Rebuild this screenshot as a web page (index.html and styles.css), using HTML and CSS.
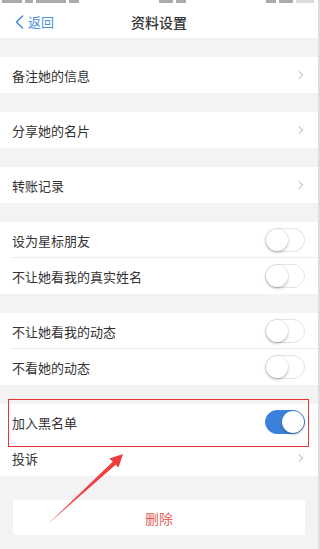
FILE: index.html
```html
<!DOCTYPE html>
<html lang="zh">
<head>
<meta charset="utf-8">
<link rel="stylesheet" href="styles.css">
</head>
<body>
<div class="page">
  <div class="status">
    <div class="frags">
      <i class="f w20"></i><i class="f w8"></i><i class="f w30"></i><i class="f w10"></i>
    </div>
    <div class="frags">
      <i class="f w14"></i><i class="f w10"></i>
    </div>
    <div class="frags">
      <i class="f w10"></i><i class="f w14"></i><i class="f w18 light"></i>
    </div>
  </div>
  <div class="nav">
    <div class="back">
      <svg class="back-ico" width="9" height="14" viewBox="0 0 9 14"><path d="M7.5 1 L1.5 7 L7.5 13" fill="none" stroke="#4a8fd8" stroke-width="1.6" stroke-linecap="round" stroke-linejoin="round"/></svg>
      <span>返回</span>
    </div>
    <div class="title">资料设置</div>
  </div>

  <div class="gap"></div>
  <div class="group">
    <div class="row"><span class="label">备注她的信息</span><span class="chev"></span></div>
  </div>
  <div class="gap"></div>
  <div class="group">
    <div class="row"><span class="label">分享她的名片</span><span class="chev"></span></div>
  </div>
  <div class="gap"></div>
  <div class="group">
    <div class="row"><span class="label">转账记录</span><span class="chev"></span></div>
  </div>
  <div class="gap"></div>
  <div class="group">
    <div class="row sep"><span class="label">设为星标朋友</span><span class="toggle"></span></div>
    <div class="row"><span class="label">不让她看我的真实姓名</span><span class="toggle"></span></div>
  </div>
  <div class="gap"></div>
  <div class="group">
    <div class="row sep"><span class="label">不让她看我的动态</span><span class="toggle"></span></div>
    <div class="row"><span class="label">不看她的动态</span><span class="toggle"></span></div>
  </div>
  <div class="gap"></div>
  <div class="group">
    <div class="row"><span class="label">加入黑名单</span><span class="toggle on"></span></div>
    <div class="row"><span class="label">投诉</span><span class="chev"></span></div>
  </div>
  <div class="gap big"></div>
  <div class="delete">删除</div>

  <div class="redbox"></div>
  <svg class="arrow" width="320" height="549" viewBox="0 0 320 549">
    <path d="M48.5 523.5 L115 461 L117 463.5 Z" fill="#ef3b3b"/>
    <path d="M48.5 523.5 L116.5 460 L115.5 459 Z" fill="#ef3b3b"/>
    <path d="M123 454 L109.5 458.5 L118.5 467.5 Z" fill="#ef3b3b"/>
  </svg>
</div>
</body>
</html>
```

FILE: styles.css
```css
* { box-sizing: border-box; }
html, body { margin: 0; padding: 0; }
body {
  font-family: "Noto Sans CJK SC", "Noto Sans", sans-serif;
  background: #f3f3f4;
  color: #333;
}
.page {
  position: relative;
  width: 320px;
  height: 549px;
  overflow: hidden;
  background: #f3f3f4;
  border-right: 2px solid #dcdcdc;
}
.status {
  height: 6px;
  background: #fff;
  display: flex;
  justify-content: space-between;
  align-items: flex-start;
  padding: 0 4px 0 2px;
}
.frags {
  display: flex;
  gap: 3px;
}
.f {
  display: block;
  height: 3px;
  background: #888;
  opacity: 0.7;
}
.f.light { background: #ccc; }
.w8 { width: 8px; }
.w10 { width: 10px; }
.w14 { width: 14px; }
.w18 { width: 18px; }
.w20 { width: 20px; }
.w30 { width: 30px; }
.nav {
  height: 32px;
  background: #fff;
  display: flex;
  align-items: center;
  justify-content: center;
  position: relative;
}
.back {
  position: absolute;
  left: 15px;
  top: 8px;
  display: flex;
  align-items: center;
  gap: 4px;
  color: #4a8fd8;
  font-size: 13px;
  line-height: 16px;
}
.title {
  font-size: 14px;
  font-weight: 500;
  color: #333;
  margin-top: -1px;
}
.gap { height: 19px; }
.gap.big { height: 24px; }
.group { background: #fff; }
.row {
  height: 36px;
  display: flex;
  align-items: center;
  justify-content: space-between;
  padding: 0 13px 0 12px;
  position: relative;
}
.row.sep::after {
  content: "";
  position: absolute;
  left: 11px;
  right: 0;
  bottom: 0;
  height: 1px;
  background: #ececec;
}
.label {
  font-size: 13px;
  color: #333;
}
.chev {
  width: 6px;
  height: 6px;
  border-top: 1.3px solid #c4c4c8;
  border-right: 1.3px solid #c4c4c8;
  transform: rotate(45deg);
  margin-right: 3px;
}
.toggle {
  width: 40px;
  height: 24px;
  border-radius: 12px;
  border: 1px solid #e3e3e3;
  background: #fff;
  position: relative;
}
.toggle::after {
  content: "";
  position: absolute;
  top: 0;
  left: 0;
  width: 22px;
  height: 22px;
  border-radius: 50%;
  background: #fff;
  box-shadow: 0 1.5px 3px rgba(0,0,0,0.25), 0 0 0 0.5px rgba(0,0,0,0.06);
}
.toggle.on {
  background: #3b81dc;
  border-color: #3b81dc;
}
.toggle.on::after { left: 16px; }
.delete {
  height: 35px;
  margin: 0 13px;
  background: #fff;
  display: flex;
  align-items: center;
  justify-content: center;
  color: #e2645e;
  font-size: 14px;
}
.redbox {
  position: absolute;
  left: 8px;
  top: 399px;
  width: 301px;
  height: 48px;
  border: 1.5px solid #e8353a;
}
.arrow {
  position: absolute;
  left: 0;
  top: 0;
}
```
